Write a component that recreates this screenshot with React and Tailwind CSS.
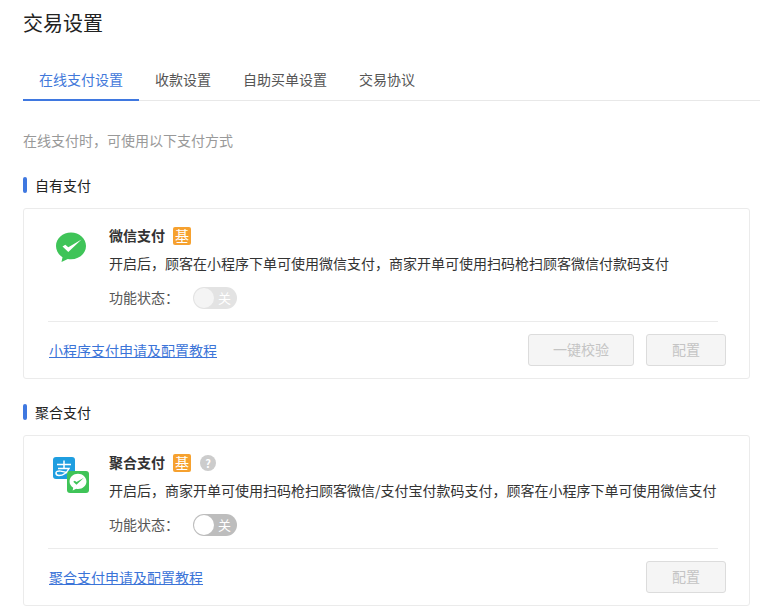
import React from "react";

const font = { fontFamily: '"Noto Sans CJK SC", "Liberation Sans", sans-serif' };

const WechatMark = ({ className, fill = "#3fc458", check = "#fff" }) => (
  <svg viewBox="0 0 32 32" className={className}>
    <path
      d="M16 1.500C7.700 1.500 1 7.600 1 15c0 4.600 2.500 8.700 6.500 11.200L6.500 31l6.300-3c1 .2 2.100.3 3.200.3 8.300 0 15-6 15-13.300S24.300 1.500 16 1.500z"
      fill={fill}
    />
    <path d="M7.500 15.500l2.800-1.700 3 2.400L26.500 8.500 13.300 21z" fill={check} />
  </svg>
);

const AggregateIcon = () => (
  <div className="relative w-9 h-9">
    <div className="absolute left-0 top-0 w-[22px] h-[22px] rounded-[3px] bg-[#1f9ee0] overflow-hidden">
      <svg viewBox="0 0 22 22" className="w-full h-full" fill="none" stroke="#fff" strokeWidth="1.500">
        <path d="M4 7.500h14M11 3.500V11M5 11.500h11c-2 4-6 7-10 7-2 0-3-1-3-2.500 0-3 7-2.500 15 1.500" />
      </svg>
    </div>
    <div className="absolute left-[14px] top-[14px] w-[22px] h-[22px] rounded-[3px] bg-[#3fc458] flex items-center justify-center">
      <WechatMark className="w-[18px] h-[18px]" fill="#fff" check="#3fc458" />
    </div>
  </div>
);

const Toggle = ({ disabled }) => (
  <div
    className={`w-11 h-[22px] rounded-full p-px flex items-center ${disabled ? "bg-[#e3e3e3]" : "bg-[#bdbdbd]"}`}
  >
    <div className={`w-5 h-5 rounded-full ${disabled ? "bg-[#f4f4f4]" : "bg-white"}`} />
    <span className="ml-1 mb-[2px] text-[13px] leading-none text-white">关</span>
  </div>
);

const DisabledButton = ({ children, width }) => (
  <button className={`${width} h-8 pb-[2px] rounded-[3px] border border-[#dcdcdc] bg-[#f5f5f5] text-sm text-[#c4c4c4]`}>
    {children}
  </button>
);

const BaseTag = () => (
  <span className="w-[18px] h-[18px] rounded-[2px] bg-[#f6a12f] text-white text-sm leading-[17px] text-center">基</span>
);

const PayCard = ({ icon, title, help, desc, disabled, link, buttons }) => (
  <div className="border border-[#ebebeb] rounded-[3px] pl-6 pr-[23px] pt-[11px] pb-3">
    <div className="flex">
      <div className="w-[61px] pl-[5px] pt-[10px] shrink-0">{icon}</div>
      <div>
        <div className="flex items-center h-[18px] mt-[7px]">
          <span className="text-sm font-bold text-[#333] mr-2 mb-[2px]">{title}</span>
          <BaseTag />
          {help && (
            <span className="ml-[9px] w-4 h-4 rounded-full bg-[#ccc] text-white text-[11px] font-bold leading-4 text-center">?</span>
          )}
        </div>
        <p className="text-sm leading-5 text-[#333] mt-2 whitespace-nowrap">{desc}</p>
        <div className="flex items-center mt-[14px] h-[22px] text-sm text-[#555]">
          <span className="w-[84px] mb-[2px]">功能状态：</span>
          <Toggle disabled={disabled} />
        </div>
      </div>
    </div>
    <div className="border-t border-[#ebebeb] mt-3 mr-2" />
    <div className="pt-3 flex items-center justify-between">
      <a className="ml-px text-sm text-[#3b74d8] underline">{link}</a>
      <div className="flex gap-3">{buttons}</div>
    </div>
  </div>
);

const SectionTitle = ({ children }) => (
  <div className="flex items-center h-4">
    <div className="w-1 h-4 rounded-sm bg-[#3f78e0] mr-2" />
    <span className="text-sm text-[#222]">{children}</span>
  </div>
);

const tabs = ["在线支付设置", "收款设置", "自助买单设置", "交易协议"];

export default function App() {
  return (
    <div className="w-[760px] h-[616px] overflow-hidden bg-white pl-[23px] pr-[10px] pt-[9px]" style={font}>
      <h1 className="text-xl leading-7 text-[#222]">交易设置</h1>
      <div className="flex mt-[27px] border-b border-[#e8e8e8] -mr-[10px] h-[37px]">
        {tabs.map((t, i) => (
          <div
            key={t}
            className={`px-4 text-sm leading-[30px] h-[37px] ${i === 0 ? "text-[#4178da] border-b-2 border-[#3f78e0]" : "text-[#555]"}`}
          >
            {t}
          </div>
        ))}
      </div>
      <p className="text-sm leading-5 text-[#999] mt-[29px]">在线支付时，可使用以下支付方式</p>
      <div className="mt-[27px]">
        <SectionTitle>自有支付</SectionTitle>
      </div>
      <div className="mt-[15px]">
        <PayCard
          icon={<WechatMark className="w-8 h-8 ml-[2px] mt-px" />}
          title="微信支付"
          desc="开启后，顾客在小程序下单可使用微信支付，商家开单可使用扫码枪扫顾客微信付款码支付"
          disabled
          link="小程序支付申请及配置教程"
          buttons={
            <>
              <DisabledButton width="w-[106px]">一键校验</DisabledButton>
              <DisabledButton width="w-20">配置</DisabledButton>
            </>
          }
        />
      </div>
      <div className="mt-[25px]">
        <SectionTitle>聚合支付</SectionTitle>
      </div>
      <div className="mt-[15px]">
        <PayCard
          icon={<AggregateIcon />}
          title="聚合支付"
          help
          desc="开启后，商家开单可使用扫码枪扫顾客微信/支付宝付款码支付，顾客在小程序下单可使用微信支付"
          link="聚合支付申请及配置教程"
          buttons={<DisabledButton width="w-20">配置</DisabledButton>}
        />
      </div>
    </div>
  );
}
